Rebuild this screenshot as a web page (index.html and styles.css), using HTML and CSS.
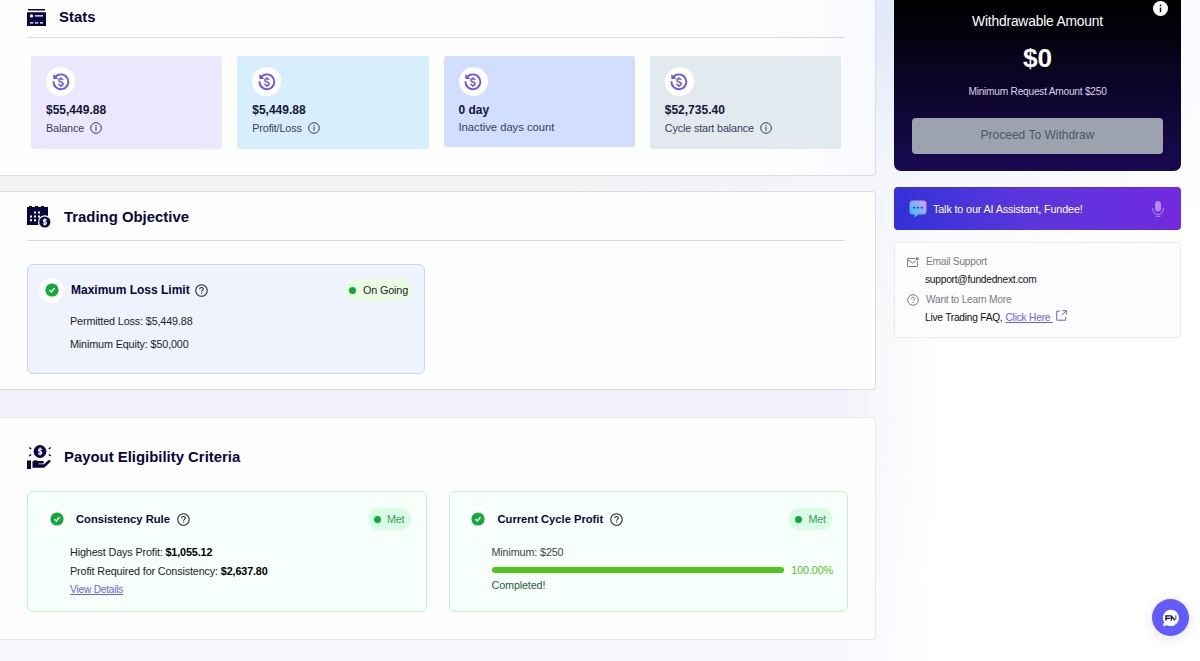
FILE: index.html
```html
<!DOCTYPE html>
<html lang="en">
  <head>
    <meta charset="UTF-8" />
    <meta name="viewport" content="width=device-width, initial-scale=1.0" />
    <title>Account overview</title>
    <link rel="stylesheet" href="styles.css">
  </head>
  <body>
    <!-- shared icons -->
    <svg class="defs" width="0" height="0">
      <symbol id="refund" viewBox="0 0 18 18">
        <path d="M3 4.3A7.4 7.4 0 1 1 1.5 8.3" fill="none" stroke="#6a57e3" stroke-width="1.9" />
        <path d="M1.3 1v5h5z" fill="#6a57e3" />
        <path d="M11 7.2c-.2-1-1-1.5-2.1-1.5s-2 .6-2 1.6c0 2.1 4.2 1.2 4.2 3.4 0 1-.9 1.7-2.2 1.7s-2.1-.7-2.2-1.8M8.9 4.2v1.5M8.9 12.4v1.5" fill="none" stroke="#6a57e3" stroke-width="1.5" />
      </symbol>
      <symbol id="info" viewBox="0 0 12 12">
        <circle cx="6" cy="6" r="5.3" fill="none" stroke="currentColor" />
        <path d="M6 5.1v3.7M6 3v1.2" stroke="currentColor" stroke-width="1.1" />
      </symbol>
      <symbol id="help" viewBox="0 0 12 12">
        <circle cx="6" cy="6" r="5.3" fill="none" stroke="currentColor" />
        <path d="M4.3 4.8c0-1 .7-1.6 1.7-1.6s1.7.6 1.7 1.5c0 1.1-1.6 1.2-1.6 2.4M6.1 8v1" fill="none" stroke="currentColor" />
      </symbol>
      <symbol id="check" viewBox="0 0 14 14">
        <circle cx="7" cy="7" r="6.6" fill="#14a83e" />
        <path d="M4.5 7.2l1.8 1.8 3.2-3.7" fill="none" stroke="#fff" stroke-width="1.4" />
      </symbol>
    </svg>

    <div class="page">
      <main class="content">
        <section class="panel stats">
          <header class="panel-head">
            <svg width="19" height="17" viewBox="0 0 19 17">
              <path d="M1 0h17v1.6H1zM0 3.2h19V17H0z" fill="#08063c" />
              <circle cx="4.5" cy="6.9" r="1.6" fill="#fff" />
              <path d="M8 6.8h8M3 13.8h3.4M8 13.8h3.2M13 13.8h3" stroke="#fff" stroke-width="1.3" />
            </svg>
            <h2>Stats</h2>
          </header>
          <div class="stat-cards">
            <div class="stat violet">
              <span class="badge"><svg width="18" height="18"><use href="#refund" /></svg></span>
              <strong>$55,449.88</strong>
              <p>Balance <svg width="12" height="12"><use href="#info" /></svg></p>
            </div>
            <div class="stat sky">
              <span class="badge"><svg width="18" height="18"><use href="#refund" /></svg></span>
              <strong>$5,449.88</strong>
              <p>Profit/Loss <svg width="12" height="12"><use href="#info" /></svg></p>
            </div>
            <div class="stat blue">
              <span class="badge"><svg width="18" height="18"><use href="#refund" /></svg></span>
              <strong>0 day</strong>
              <p>Inactive days count</p>
            </div>
            <div class="stat grey">
              <span class="badge"><svg width="18" height="18"><use href="#refund" /></svg></span>
              <strong>$52,735.40</strong>
              <p>Cycle start balance <svg width="12" height="12"><use href="#info" /></svg></p>
            </div>
          </div>
        </section>

        <section class="panel objective">
          <header class="panel-head">
            <svg width="24" height="22" viewBox="0 0 24 22">
              <path d="M0 1h2V0h3v1h3V0h3v1h3V0h3v1h4v18H0z" fill="#08063c" />
              <path d="M7 6.6h2M11 6.6h2M3 10.4h2M7 10.4h2M11 10.4h2M3 14.2h2M7 14.2h2" stroke="#fff" stroke-width="2" />
              <circle cx="17.8" cy="16" r="6.8" fill="#fff" />
              <circle cx="17.8" cy="16" r="5.6" fill="#08063c" />
              <path d="M19.4 14.6c-.2-.8-.8-1-1.6-1s-1.5.3-1.5 1.1c0 1.6 3.2.8 3.2 2.5 0 .8-.7 1.2-1.6 1.2s-1.7-.4-1.8-1.2M17.8 12.3v7.4" fill="none" stroke="#fff" stroke-width="1.1" />
            </svg>
            <h2>Trading Objective</h2>
          </header>
          <article class="rule">
            <div class="rule-head">
              <span class="tick"><svg width="14" height="14"><use href="#check" /></svg></span>
              <h3>Maximum Loss Limit</h3>
              <svg class="help" width="13" height="13"><use href="#help" /></svg>
              <span class="pill">On Going</span>
            </div>
            <p>Permitted Loss: $5,449.88</p>
            <p>Minimum Equity: $50,000</p>
          </article>
        </section>

        <section class="panel payout">
          <header class="panel-head">
            <svg width="25" height="24" viewBox="0 0 25 24">
              <circle cx="13" cy="6.5" r="6.4" fill="#08063c" />
              <path d="M14.9 4.9c-.2-.9-.9-1.2-1.8-1.2s-1.7.4-1.7 1.3c0 1.9 3.5.9 3.5 2.8 0 .9-.8 1.4-1.8 1.4s-1.8-.5-1.9-1.4M13.1 2.4v8.2" fill="none" stroke="#fff" stroke-width="1.1" />
              <path d="M2.3 2.5l1.9 1.5M2.3 10.8l1.9-1.3M23.7 2.5L21.8 4M23.7 10.8l-1.9-1.3" stroke="#08063c" stroke-width="1.5" />
              <path d="M0 15.5h4V24H0zM5.5 16.5c2-1.6 4-1.4 5.7-.4h4.6c1.6.2 1.5 2.2 0 2.4h-4.4v.8h5.4l4.7-4c1.5-.9 2.8.5 1.7 1.8l-4.9 4.7c-.7.7-1.4 1-2.3 1H5.5z" fill="#08063c" />
            </svg>
            <h2>Payout Eligibility Criteria</h2>
          </header>
          <div class="criteria">
            <article class="criterion">
              <div class="rule-head">
                <span class="tick"><svg width="14" height="14"><use href="#check" /></svg></span>
                <h3>Consistency Rule</h3>
                <svg class="help" width="13" height="13"><use href="#help" /></svg>
                <span class="pill met">Met</span>
              </div>
              <p>Highest Days Profit: <b>$1,055.12</b></p>
              <p>Profit Required for Consistency: <b>$2,637.80</b></p>
              <a class="link" href="#">View Details</a>
            </article>
            <article class="criterion">
              <div class="rule-head">
                <span class="tick"><svg width="14" height="14"><use href="#check" /></svg></span>
                <h3>Current Cycle Profit</h3>
                <svg class="help" width="13" height="13"><use href="#help" /></svg>
                <span class="pill met">Met</span>
              </div>
              <p class="soft">Minimum: $250</p>
              <div class="progress">
                <div class="track"><div class="bar" style="width: 100%"></div></div>
                <span>100.00%</span>
              </div>
              <p class="done">Completed!</p>
            </article>
          </div>
        </section>
      </main>

      <aside class="sidebar">
        <section class="withdraw">
          <svg class="withdraw-info" width="15" height="15" viewBox="0 0 15 15">
            <circle cx="7.5" cy="7.5" r="7.5" fill="#fff" />
            <path d="M7.5 6.4v4.8M7.5 3.6v1.6" stroke="#08063c" stroke-width="1.5" />
          </svg>
          <h4>Withdrawable Amount</h4>
          <div class="amount">$0</div>
          <p>Minimum Request Amount $250</p>
          <button disabled>Proceed To Withdraw</button>
        </section>

        <section class="assistant">
          <svg width="18" height="18" viewBox="0 0 18 18">
            <defs>
              <linearGradient id="bubble" x1="0" y1="1" x2="1" y2="0">
                <stop offset="0" stop-color="#39b4fb" />
                <stop offset=".5" stop-color="#78b5fb" />
                <stop offset="1" stop-color="#e69bf3" />
              </linearGradient>
            </defs>
            <path d="M4 .5h10a3.5 3.5 0 0 1 3.5 3.5v7a3.5 3.5 0 0 1-3.5 3.5h-4.5L5.6 17.6v-3.1H4A3.5 3.5 0 0 1 .5 11V4A3.5 3.5 0 0 1 4 .5z" fill="url(#bubble)" />
            <path d="M4.2 7.6h2M8 7.6h2M11.8 7.6h2" stroke="#3a3fbd" stroke-width="1.8" />
          </svg>
          <span>Talk to our AI Assistant, Fundee!</span>
          <svg class="mic" width="12" height="16" viewBox="0 0 12 16">
            <rect x="3" y="0" width="6" height="10.5" rx="3" fill="#b18bf0" />
            <path d="M.7 6.8v1.3a5.3 5.3 0 0 0 10.6 0V6.8M6 13.4V16M3.5 15.5h5" fill="none" stroke="#a77eee" stroke-width="1.1" />
          </svg>
        </section>

        <section class="support">
          <h5>
            <svg width="12" height="10" viewBox="0 0 12 10">
              <path d="M8 1.5H.6v8h9.8V4.5M.8 3l4.7 3 3.4-2" fill="none" stroke="#777b80" />
              <circle cx="10.2" cy="1.8" r="1.5" fill="#777b80" />
            </svg>
            Email Support
          </h5>
          <p>support@fundednext.com</p>
          <h5><svg width="12" height="12"><use href="#help" /></svg> Want to Learn More</h5>
          <p>
            Live Trading FAQ, <a class="link" href="#">Click Here&nbsp;</a>
            <svg width="11" height="11" viewBox="0 0 11 11">
              <path d="M4 1.2H.7v9h9V7M6.5.6h3.9v3.9M10.2.8L5.8 5.2" fill="none" stroke="#6a60e8" />
            </svg>
          </p>
        </section>
      </aside>
    </div>

    <button class="chat">
      <svg width="18" height="18" viewBox="0 0 18 18">
        <path d="M9 .8a8.1 8.1 0 1 1-3.6 15.4L.8 17.2l1.3-4.1A8.1 8.1 0 0 1 9 .8z" fill="#fff" />
        <path d="M4 11.5V6.9h4.2M4 9.4h3.8M9.3 11.5V7.2l3.9 4" fill="none" stroke="#11113a" stroke-width="1.4" />
        <path d="M13.8 10.4V6.2" stroke="#635bff" stroke-width="1.3" />
      </svg>
    </button>
  </body>
</html>
```

FILE: styles.css
```css
* {
  box-sizing: border-box;
}

body {
  margin: 0;
  height: 661px;
  overflow: hidden;
  font-family: "Liberation Sans", Arial, sans-serif;
  font-size: 10.8px;
  letter-spacing: -0.14px;
  color: #1d1d28;
  background:
    radial-gradient(ellipse 430px 300px at 880px 20px, #e2eaf7 0%, rgba(243, 245, 253, 0.8) 50%, rgba(255, 255, 255, 0) 100%),
    linear-gradient(90deg, rgba(255, 255, 255, 0) 840px, #fff 940px),
    linear-gradient(180deg, #f3f3f3 0, #f3f3f4 200px, #f2f3fa 400px, #f8f9ff 661px);
}

h2,
h3,
h4,
h5,
p {
  margin: 0;
}

svg {
  display: block;
  flex: none;
}

.defs {
  position: absolute;
}

.page {
  display: flex;
  gap: 18px;
  height: 661px;
}

.content {
  width: 876px;
}

.panel {
  padding: 0 27px;
  border: 1px solid #dcdde2;
  border-left: 0;
  background: #fefefe;
}

.panel-head {
  display: flex;
  align-items: center;
  width: 818px;
}

.panel-head h2 {
  color: #08063c;
  font-size: 14.9px;
  letter-spacing: 0;
  line-height: 20px;
}

/* stats */
.stats {
  height: 176px;
  border-top: 0;
  border-radius: 0 0 4px 0;
  background: linear-gradient(90deg, #fefefe 770px, #f8f9fe 875px);
}

.stats .panel-head {
  gap: 13px;
  height: 38px;
  padding-bottom: 4px;
  border-bottom: 1px solid #d9d9dc;
}

.stats .panel-head svg {
  margin-top: 1px;
}

.stat-cards {
  display: flex;
  align-items: flex-start;
  gap: 15px;
  width: 818px;
  padding: 18px 4px 0;
}

.stat {
  flex: 1;
  height: 93px;
  padding: 11px 15px;
  border-radius: 3px;
}

.stat strong {
  display: block;
  margin-top: 7px;
  color: #14163a;
  font-size: 12px;
  letter-spacing: 0;
  line-height: 14px;
}

.stat p {
  display: flex;
  align-items: center;
  gap: 6px;
  margin-top: 4px;
  color: #3a3c5c;
  line-height: 14px;
}

.stat.violet {
  background: #ebe8fe;
}
.stat.sky {
  background: #d7eefc;
}
.stat.blue {
  height: 91px;
  background: #d2deff;
}
.stat.blue p {
  margin-top: 3px;
  font-size: 11.2px;
  letter-spacing: 0;
}
.stat.grey {
  background: #e2eaf0;
}

.badge {
  display: flex;
  align-items: center;
  justify-content: center;
  width: 29px;
  height: 29px;
  border-radius: 50%;
  background: #fff;
}

/* trading objective */
.objective {
  height: 199px;
  margin-top: 15px;
  border-radius: 0 4px 4px 0;
}

.objective .panel-head {
  gap: 13px;
  height: 49px;
  padding-top: 2px;
  border-bottom: 1px solid #d9d9dc;
}

.rule {
  width: 398px;
  height: 110px;
  margin-top: 23px;
  padding: 12px 11px 0 11px;
  border: 1px solid #c9d3f3;
  border-radius: 6px;
  background: #eff3fe;
}

.rule-head {
  display: flex;
  align-items: center;
  height: 26px;
}

.rule-head h3 {
  margin-left: 7px;
  color: #08063c;
  font-size: 12px;
  letter-spacing: 0;
  line-height: 16px;
}

.help {
  margin-left: 5px;
  color: #24242e;
}

.tick {
  display: flex;
  align-items: center;
  justify-content: center;
  width: 25px;
  height: 25px;
  border-radius: 50%;
  background: #fff;
}

.pill {
  display: flex;
  align-items: center;
  gap: 7px;
  height: 22px;
  margin-left: auto;
  padding: 0 5px 0 5px;
  border-radius: 11px;
  background: #e9fde3;
}

.pill::before {
  content: "";
  width: 7px;
  height: 7px;
  border-radius: 50%;
  background: #0fa93b;
}

.rule p {
  padding-left: 31px;
  line-height: 23px;
}

.rule-head + p {
  margin-top: 7px;
}

/* payout */
.payout {
  height: 223px;
  margin-top: 27px;
  border-color: #e6e7f0;
  border-radius: 0 4px 4px 0;
}

.payout .panel-head {
  gap: 12px;
  height: 73px;
  padding-top: 4px;
}

.criteria {
  display: flex;
  gap: 22px;
  width: 821px;
}

.criterion {
  flex: 1;
  height: 121px;
  padding: 14px 15px 0 42px;
  border: 1px solid #bdf2d5;
  border-radius: 6px;
  background: #f6fffa;
}

.criterion .tick {
  margin-left: -26px;
  background: #fcfffd;
}

.criterion h3 {
  margin-left: 7px;
  font-size: 11.2px;
}

.criterion .help {
  margin-left: 7px;
}

.criterion p {
  line-height: 19px;
}

.criterion .rule-head + p {
  margin-top: 11px;
}

.criterion b {
  color: #000;
}

.pill.met {
  padding: 0 6px;
  gap: 6px;
  color: #419c5b;
  background: #d9fce6;
}

.link {
  color: #6a60e8;
  font-size: 10.2px;
  letter-spacing: -0.22px;
}

.criterion .link {
  display: block;
  line-height: 17px;
}

.criterion .soft {
  color: #3f4446;
}

.progress {
  display: flex;
  align-items: center;
  gap: 7px;
  height: 15px;
  margin-right: -1px;
  color: #55bd2b;
}

.track {
  flex: 1;
  height: 6px;
  border-radius: 3px;
  background: #e5e7eb;
}

.bar {
  height: 6px;
  border-radius: 3px;
  background: #52c41a;
}

.criterion .done {
  line-height: 16px;
  color: #26633f;
}

/* sidebar */
.sidebar {
  width: 287px;
}

.withdraw {
  position: relative;
  height: 171px;
  padding: 12px 18px 0;
  border-radius: 0 0 7px 7px;
  text-align: center;
  color: #fff;
  background: linear-gradient(180deg, #000 0, #02010a 25px, #190a52 171px);
}

.withdraw-info {
  position: absolute;
  top: 1px;
  right: 13px;
}

.withdraw h4 {
  font-size: 13.8px;
  font-weight: normal;
  letter-spacing: -0.18px;
  line-height: 19px;
}

.amount {
  margin-top: 11px;
  font-size: 26.2px;
  font-weight: bold;
  letter-spacing: 0;
  line-height: 32px;
}

.withdraw p {
  margin-top: 11px;
  color: #d9d4e8;
  font-size: 10.2px;
  letter-spacing: -0.25px;
  line-height: 14px;
}

.withdraw button {
  display: block;
  width: 100%;
  height: 36px;
  margin-top: 18.5px;
  padding: 0 0 1px;
  border: 0;
  border-radius: 4px;
  color: #4b5563;
  font: 12px "Liberation Sans", Arial, sans-serif;
  background: #9ca3af;
}

.assistant {
  display: flex;
  align-items: center;
  height: 43px;
  margin-top: 16px;
  padding: 0 17px 0 15px;
  border-radius: 4px;
  color: #fff;
  background: linear-gradient(75deg, #3131d7, #5a36dc 45%, #722adf);
}

.assistant span {
  margin-left: 6px;
}

.mic {
  margin-left: auto;
}

.support {
  height: 96px;
  margin-top: 12px;
  padding: 10px 12px 0;
  border: 1px solid #e8eaf1;
  border-radius: 4px;
  font-size: 10.2px;
  letter-spacing: -0.24px;
  background: #fdfdff;
}

.support h5 {
  display: flex;
  align-items: center;
  gap: 7px;
  height: 17px;
  color: #777b80;
  font-size: 10.2px;
  font-weight: normal;
}

.support p {
  display: flex;
  align-items: center;
  height: 18px;
  padding-left: 18px;
  color: #101014;
}

.support p + h5 {
  margin-top: 3px;
}

.support p .link {
  margin-left: 3px;
}

.support p svg {
  margin: -3px 0 0 3px;
}

/* chat launcher */
.chat {
  position: absolute;
  right: 11px;
  bottom: 25px;
  display: flex;
  align-items: center;
  justify-content: center;
  width: 37px;
  height: 37px;
  padding: 0;
  border: 0;
  border-radius: 50%;
  background: #635bff;
  box-shadow: 0 2px 14px rgba(0, 0, 0, 0.12);
}
```
